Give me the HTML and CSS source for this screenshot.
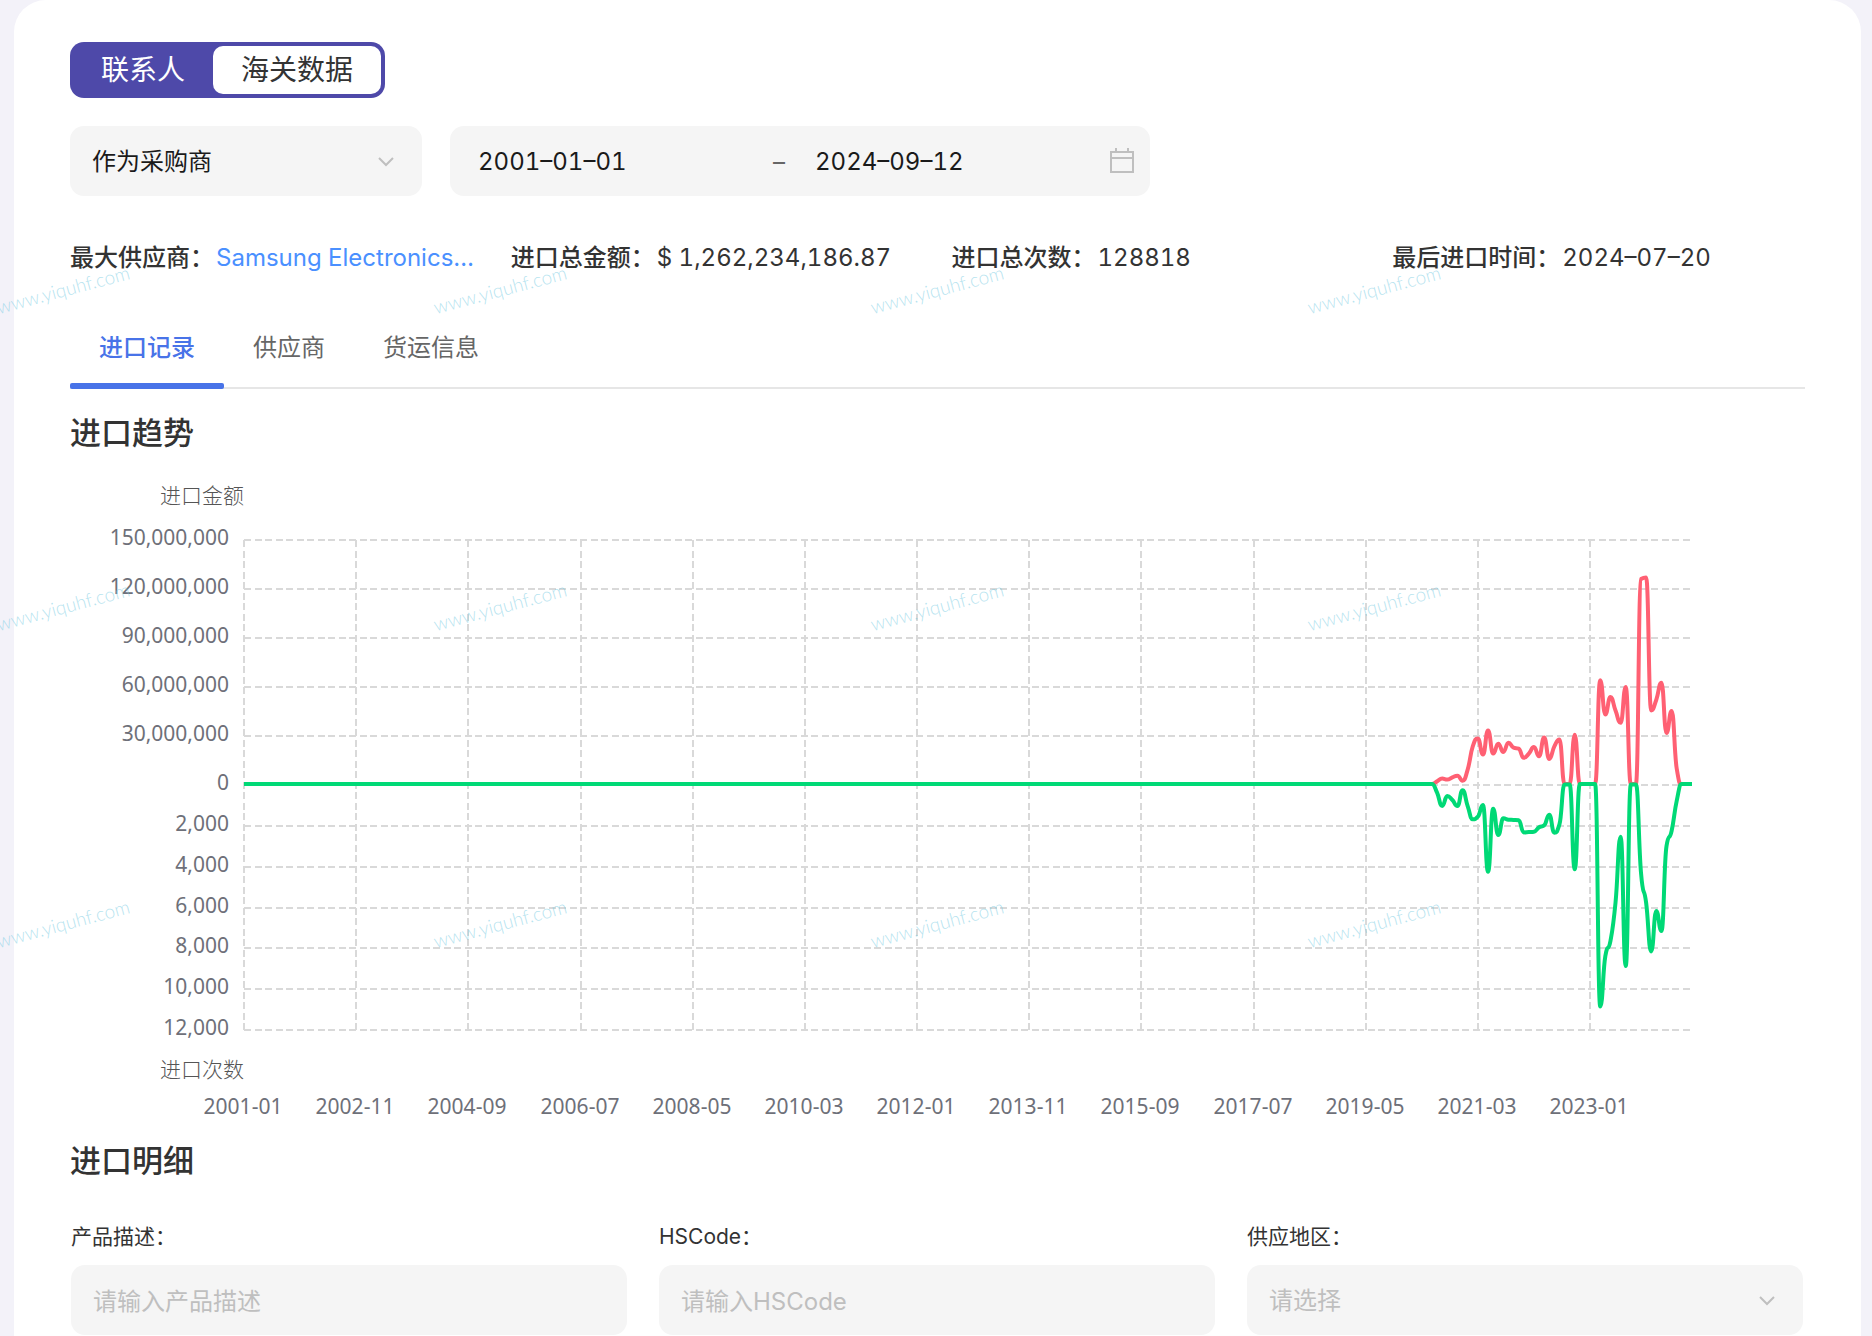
FILE: index.html
```html
<!DOCTYPE html>
<html lang="zh-CN">
<head>
<meta charset="utf-8">
<meta name="viewport" content="width=device-width, initial-scale=1">
<title>海关数据</title>
<link rel="stylesheet" href="styles.css">
</head>
<body>
<main class="card">
  <div class="switch">
    <button type="button" class="switch-item">联系人</button>
    <button type="button" class="switch-item switch-item-active">海关数据</button>
  </div>

  <div class="filters">
    <div class="select-box role-box">
      <select class="field" aria-label="身份">
        <option>作为采购商</option>
        <option>作为供应商</option>
      </select>
      <svg class="chevron" viewBox="0 0 18 12" aria-hidden="true"><path d="M2 2 L9 9 L16 2"/></svg>
    </div>
    <div class="field date-range">
      <input class="date-input date-start" type="text" value="2001–01–01" aria-label="开始日期">
      <span class="date-sep">–</span>
      <input class="date-input" type="text" value="2024–09–12" aria-label="结束日期">
      <svg class="calendar" viewBox="0 0 24 26" aria-hidden="true"><path d="M1 4 H23 V24 H1 Z M1 10 H23 M6 0 V5 M18 0 V5"/></svg>
    </div>
  </div>

  <div class="stats">
    <div class="stat"><span class="stat-label">最大供应商：</span><a class="stat-link" href="#">Samsung Electronics…</a></div>
    <div class="stat"><span class="stat-label">进口总金额：</span><span>$ 1,262,234,186.87</span></div>
    <div class="stat"><span class="stat-label">进口总次数：</span><span>128818</span></div>
    <div class="stat"><span class="stat-label">最后进口时间：</span><span>2024–07–20</span></div>
  </div>

  <nav class="tabs">
    <button type="button" class="tab tab-active">进口记录</button>
    <button type="button" class="tab">供应商</button>
    <button type="button" class="tab">货运信息</button>
  </nav>

  <h2 class="title">进口趋势</h2>
  <svg class="chart" id="trend" viewBox="0 0 1735 660" role="img" aria-label="进口趋势"></svg>

  <h2 class="title title-detail">进口明细</h2>
  <form class="search">
    <div class="search-item">
      <label class="search-label" for="product">产品描述：</label>
      <input class="field" id="product" type="text" placeholder="请输入产品描述">
    </div>
    <div class="search-item">
      <label class="search-label" for="hscode">HSCode：</label>
      <input class="field" id="hscode" type="text" placeholder="请输入HSCode">
    </div>
    <div class="search-item">
      <label class="search-label" for="region">供应地区：</label>
      <div class="select-box">
        <select class="field field-empty" id="region">
          <option>请选择</option>
        </select>
        <svg class="chevron" viewBox="0 0 18 12" aria-hidden="true"><path d="M2 2 L9 9 L16 2"/></svg>
      </div>
    </div>
  </form>
</main>

<div class="watermark" aria-hidden="true">
  <span>www.yiquhf.com</span><span>www.yiquhf.com</span><span>www.yiquhf.com</span><span>www.yiquhf.com</span>
  <span>www.yiquhf.com</span><span>www.yiquhf.com</span><span>www.yiquhf.com</span><span>www.yiquhf.com</span>
  <span>www.yiquhf.com</span><span>www.yiquhf.com</span><span>www.yiquhf.com</span><span>www.yiquhf.com</span>
</div>
<script src="chart.js"></script>
</body>
</html>
```
FILE: styles.css
```css
* {
  box-sizing: border-box;
}

body {
  position: relative;
  margin: 0;
  background: #f3f2f9;
  color: #333;
  font-family: Inter, "Noto Sans CJK SC", sans-serif;
  font-size: 24px;
  font-variant-numeric: tabular-nums;
  line-height: 36px;
}

button,
input,
select {
  font: inherit;
  font-variant-numeric: inherit;
  color: inherit;
}

.card {
  min-height: 100vh;
  margin: 0 11px 0 14px;
  padding: 42px 56px 0;
  background: #fff;
  border-radius: 32px 32px 0 0;
}

.switch {
  display: flex;
  width: max-content;
  height: 56px;
  padding: 4px 4px 4px 3px;
  background: #4e49a9;
  border-radius: 14px;
}

.switch-item {
  padding: 0 28px;
  border: 0;
  border-radius: 10px;
  background: none;
  color: #fff;
  font-size: 28px;
  line-height: 48px;
}

.switch-item-active {
  background: #fff;
  color: #333;
}

.filters {
  display: flex;
  gap: 28px;
  margin-top: 28px;
}

.field {
  display: block;
  width: 100%;
  height: 70px;
  padding: 2px 22px 0;
  border: 0;
  border-radius: 14px;
  background: #f5f5f5;
  appearance: none;
  outline: none;
}

.field::placeholder,
.field-empty {
  color: #bfbfbf;
  opacity: 1;
}

.select-box {
  position: relative;
}

.role-box {
  width: 352px;
  color: #1a1a1a;
}

.chevron {
  position: absolute;
  top: 30px;
  right: 27px;
  width: 18px;
  height: 12px;
  fill: none;
  stroke: #bfbfbf;
  stroke-width: 2;
}

.date-range {
  display: flex;
  align-items: center;
  width: 700px;
  padding: 0 16px 0 28px;
  color: #1a1a1a;
}

.date-input {
  flex: 1;
  min-width: 0;
  padding: 2px 0 0;
  border: 0;
  background: none;
  outline: none;
}

.date-sep {
  width: 42px;
  padding-top: 2px;
  color: #666;
}

.calendar {
  width: 24px;
  height: 26px;
  fill: none;
  stroke: #bfbfbf;
  stroke-width: 2;
}

.stats {
  display: grid;
  grid-template-columns: repeat(4, minmax(0, 1fr));
  gap: 28px;
  margin-top: 44px;
}

.stat {
  white-space: nowrap;
}

.stat-label {
  margin-right: 2px;
  font-weight: 500;
}

.stat-link {
  color: #4a90ff;
  text-decoration: none;
}

.tabs {
  display: flex;
  margin-top: 28px;
  box-shadow: inset 0 -2px #e6e6e6;
}

.tab {
  position: relative;
  padding: 26px 29px 23px;
  border: 0;
  background: none;
  color: #666;
}

.tab-active {
  color: #4873e8;
  font-weight: 500;
}

.tab-active::after {
  content: "";
  position: absolute;
  right: 0;
  bottom: 0;
  left: 0;
  height: 6px;
  border-radius: 2px;
  background: #4873e8;
}

.title {
  margin: 22px 0 15px;
  font-size: 31px;
  font-weight: 500;
  line-height: 44px;
}

.title-detail {
  margin: 9px 0 40px;
}

.chart {
  display: block;
  width: 100%;
  height: auto;
}

.grid-line {
  stroke: #d9d9d9;
  stroke-width: 2;
  stroke-dasharray: 7 4 7 3;
}

.axis-text {
  fill: #6e7079;
  font-family: "Noto Sans", "Noto Sans CJK SC", sans-serif;
  font-size: 21px;
}

.axis-title {
  fill: #555;
  font-family: "Noto Sans CJK SC", sans-serif;
  font-size: 21px;
  font-weight: 300;
}

.series {
  fill: none;
  stroke-width: 4;
  stroke-linejoin: round;
}

.series-amount {
  stroke: #ff6073;
}

.series-count {
  stroke: #00d976;
}

.search {
  display: grid;
  grid-template-columns: repeat(3, minmax(0, 1fr));
  gap: 32px;
  padding: 0 2px 0 1px;
}

.search-label {
  display: block;
  margin-bottom: 14px;
  font-size: 21px;
  line-height: 28px;
}

.watermark {
  position: absolute;
  inset: 0;
  display: grid;
  grid-template-columns: repeat(4, 437px);
  grid-auto-rows: 317px;
  align-content: start;
  overflow: hidden;
  padding-top: 2px;
  pointer-events: none;
  color: rgba(110, 200, 225, 0.5);
  font-family: Lato, sans-serif;
  font-size: 19px;
  font-weight: 300;
}

.watermark span {
  align-self: end;
  justify-self: start;
  line-height: 24px;
  transform: rotate(-15deg);
  transform-origin: 0 100%;
}
```
FILE: chart.js
```js
const NS = "http://www.w3.org/2000/svg";
const svg = document.getElementById("trend");

const LEFT = 174, RIGHT = 1622, TOP = 70, ZERO = 315, BOTTOM = 560;
const MONTHS = 285;          // 2001-01 to 2024-09
const FIRST = 234;           // first month with trade, 2020-07
const AMOUNT_MAX = 150, COUNT_MAX = 12000;

// import amount, in millions
const amounts = [1.6, 3.3, 2.7, 4.1, 5.1, 2, 8.8, 23, 27.8, 18, 32.8, 18.6, 24.7, 19.6, 25.3, 22.2, 21.6,
  16, 18.6, 22.6, 17, 28.4, 15.3, 23, 27.3, 0, 0, 30.2, 0, 0, 0, 0, 63.5, 42.6, 53.3, 45, 37.5, 59.4, 0, 0,
  125.5, 126.5, 45, 51.6, 62, 31.2, 44.7, 9.5, 0, 0, 0];
// number of imports
const counts = [425, 1080, 590, 785, 1080, 300, 1080, 1730, 1600, 1030, 4300, 1210, 2500, 1680, 1750, 1760,
  1780, 2370, 2350, 2335, 2120, 2025, 1500, 2385, 1980, 20, 20, 4180, 0, 0, 0, 0, 10900, 8430, 7690, 5810,
  2580, 8920, 30, 30, 4350, 5810, 8200, 6220, 7200, 3040, 2300, 830, 0, 0, 0];

const xOf = i => LEFT + (RIGHT - LEFT) * i / (MONTHS - 1);

function add(tag, attrs, text) {
  const el = document.createElementNS(NS, tag);
  for (const key in attrs) el.setAttribute(key, attrs[key]);
  if (text) el.textContent = text;
  svg.appendChild(el);
}

function gridLine(x1, y1, x2, y2) {
  add("line", { class: "grid-line", x1, y1, x2, y2 });
}

function rowLabel(value, y) {
  add("text", { class: "axis-text", x: 159, y: y + 5, "text-anchor": "end" }, value.toLocaleString("en-US"));
}

for (let n = 5; n >= 0; n--) {
  const y = ZERO - (ZERO - TOP) * n / 5;
  gridLine(LEFT, y, RIGHT, y);
  rowLabel(n * 30000000, y);
}
for (let n = 1; n <= 6; n++) {
  const y = Math.round(ZERO + (BOTTOM - ZERO) * n / 6);
  gridLine(LEFT, y, RIGHT, y);
  rowLabel(n * 2000, y);
}
for (let i = 0; i <= 264; i += 22) {
  const x = Math.round(xOf(i));
  const label = (2001 + Math.floor(i / 12)) + "-" + String(i % 12 + 1).padStart(2, "0");
  gridLine(x, TOP, x, BOTTOM);
  add("text", { class: "axis-text", x: x - 1, y: 644, "text-anchor": "middle" }, label);
}
add("text", { class: "axis-title", x: LEFT, y: 33, "text-anchor": "end" }, "进口金额");
add("text", { class: "axis-title", x: LEFT, y: 607, "text-anchor": "end" }, "进口次数");

// monotone cubic curve through the points
function curve(points) {
  const n = points.length;
  const slope = [];
  for (let i = 0; i < n - 1; i++) {
    slope.push((points[i + 1][1] - points[i][1]) / (points[i + 1][0] - points[i][0]));
  }
  const tangent = [0];
  for (let i = 1; i < n - 1; i++) {
    const a = slope[i - 1], b = slope[i];
    tangent.push(a * b <= 0 ? 0 : Math.sign(a) * Math.min(Math.abs(a), Math.abs(b), Math.abs(a + b) / 4) * 2);
  }
  tangent.push(0);
  let d = "M" + points[0].join(" ");
  for (let i = 0; i < n - 1; i++) {
    const [x0, y0] = points[i], [x1, y1] = points[i + 1], h = (x1 - x0) / 2;
    d += `C${x0 + h} ${y0 + tangent[i] * h} ${x1 - h} ${y1 - tangent[i + 1] * h} ${x1} ${y1}`;
  }
  return d;
}

function series(name, values, toY) {
  const points = [[LEFT, toY(0)], [xOf(FIRST - 1), toY(0)]];
  values.forEach((v, i) => points.push([xOf(FIRST + i), toY(v)]));
  add("path", { class: "series " + name, d: curve(points) });
}

series("series-amount", amounts, v => ZERO - 1 - v * (ZERO - TOP) / AMOUNT_MAX);
series("series-count", counts, v => ZERO - 1 + v * (BOTTOM - ZERO) / COUNT_MAX);
```
